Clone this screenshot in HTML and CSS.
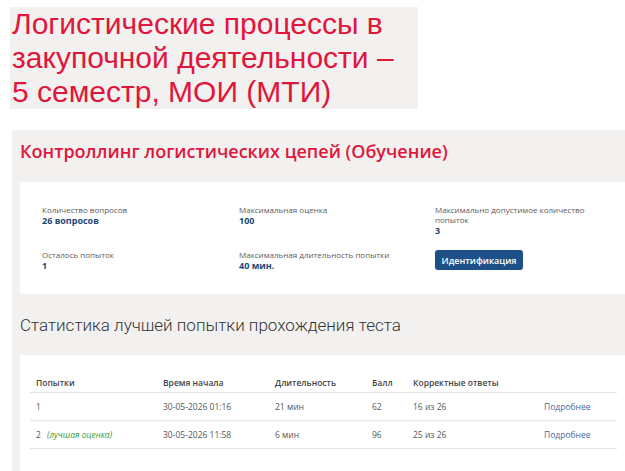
FILE: index.html
```html
<!doctype html>
<html>
<head>
	<meta charset="utf-8">
	<title>Контроллинг логистических цепей</title>
	<link rel="stylesheet" href="styles.css">
</head>
<body>
	<div class="banner">Логистические процессы в<br>закупочной деятельности –<br>5 семестр, МОИ (МТИ)</div>

	<div class="page">
		<h1 class="course-title">Контроллинг логистических цепей (Обучение)</h1>

		<div class="card info">
			<div class="item">
				<div class="label">Количество вопросов</div>
				<div class="value">26 вопросов</div>
			</div>
			<div class="item">
				<div class="label">Максимальная оценка</div>
				<div class="value">100</div>
			</div>
			<div class="item">
				<div class="label">Максимально допустимое количество попыток</div>
				<div class="value">3</div>
			</div>
			<div class="item">
				<div class="label">Осталось попыток</div>
				<div class="value">1</div>
			</div>
			<div class="item">
				<div class="label">Максимальная длительность попытки</div>
				<div class="value">40 мин.</div>
			</div>
			<div class="item">
				<button class="btn">Идентификация</button>
			</div>
		</div>

		<h2 class="section-title">Статистика лучшей попытки прохождения теста</h2>

		<div class="card stats">
			<table class="attempts">
				<tr>
					<th class="c1">Попытки</th>
					<th class="c2">Время начала</th>
					<th class="c3">Длительность</th>
					<th class="c4">Балл</th>
					<th class="c5">Корректные ответы</th>
					<th></th>
				</tr>
				<tr>
					<td>1</td>
					<td>30-05-2026 01:16</td>
					<td>21 мин</td>
					<td>62</td>
					<td>16 из 26</td>
					<td><a href="#">Подробнее</a></td>
				</tr>
				<tr>
					<td>2 <span class="best">(лучшая оценка)</span></td>
					<td>30-05-2026 11:58</td>
					<td>6 мин</td>
					<td>96</td>
					<td>25 из 26</td>
					<td><a href="#">Подробнее</a></td>
				</tr>
			</table>
		</div>
	</div>
</body>
</html>
```

FILE: styles.css
```css
body {
	margin: 0;
	background: #fff;
	font-family: "Open Sans", "Noto Sans", sans-serif;
	color: #555;
}
.banner {
	margin: 7px 0 0 10px;
	width: 406px;
	height: 102px;
	padding-left: 2px;
	background: #f2f1ef;
	color: #e0163c;
	font-family: "Liberation Sans", Arial, sans-serif;
	font-size: 30px;
	line-height: 34px;
}
.page {
	margin: 21px 0 0 12px;
	padding: 0 0 0 8px;
	background: #f2f1ef;
}
.course-title {
	margin: 0;
	padding: 7px 0 16px 0;
	color: #e0163c;
	font-size: 18px;
	font-weight: 600;
	line-height: 29px;
}
.card {
	background: #fff;
}
.info {
	display: grid;
	grid-template-columns: 197px 196px 1fr;
	row-gap: 14px;
	padding: 23px 0 23px 22px;
}
.label {
	font-size: 8px;
	line-height: 10px;
	color: #5a5a5a;
}
.value {
	font-size: 9px;
	line-height: 11px;
	font-weight: 700;
	color: #1e4675;
}
.item:nth-child(3) .label {
	width: 160px;
}
.btn {
	display: block;
	width: 88px;
	height: 20px;
	padding: 0;
	border: 0;
	border-radius: 3px;
	background: #1d5088;
	color: #fff;
	font-family: "Open Sans", sans-serif;
	font-size: 9px;
	font-weight: 600;
}
.section-title {
	margin: 0;
	padding: 20px 0 18px 0;
	font-family: Roboto, "Open Sans", sans-serif;
	font-size: 17px;
	font-weight: 300;
	line-height: 23px;
	color: #333;
}
.stats {
	padding: 17px 0 22px 10px;
}
.attempts {
	width: 587px;
	border-collapse: collapse;
	font-size: 8.5px;
}
.attempts th {
	text-align: left;
	font-weight: 600;
	color: #444;
	height: 20px;
	padding: 0 0 0 6px;
	border-bottom: 1px solid #e6e6e6;
}
.attempts td {
	height: 27px;
	padding: 0 0 0 6px;
	border-bottom: 1px solid #e6e6e6;
}
.c1 { width: 121px; }
.c2 { width: 106px; }
.c3 { width: 91px; }
.c4 { width: 35px; }
.c5 { width: 125px; }
.best {
	margin-left: 4px;
	color: #3a9a3a;
	font-style: italic;
}
.attempts a {
	color: #3d6a9e;
	text-decoration: none;
}
```
